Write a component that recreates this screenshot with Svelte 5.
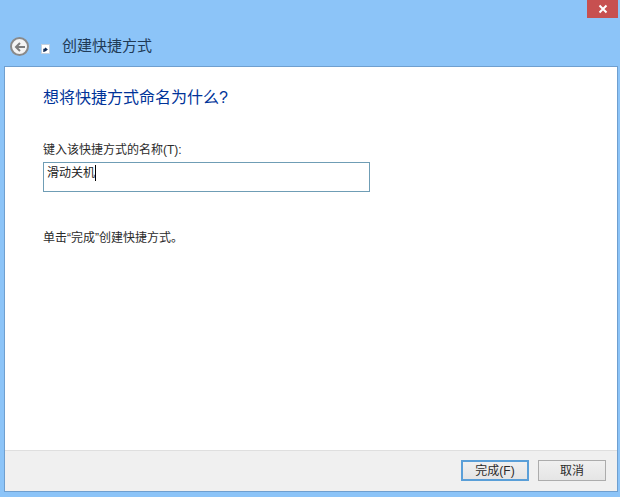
<script>
  let name = '滑动关机'
</script>

<div class="window">
  <div class="caption">
    <div class="close">
      <svg width="10" height="10" viewBox="0 0 10 10"><path d="M1.5 1.5 8.5 8.5M8.5 1.5 1.5 8.5" stroke="#fff" stroke-width="2" fill="none" /></svg>
    </div>
  </div>
  <div class="nav">
    <div class="back">
      <svg width="12" height="12" viewBox="0 0 12 12"><path d="M11 6H2.5M6 2 2 6l4 4" stroke="#7d7d7d" stroke-width="2" fill="none" /></svg>
    </div>
    <svg class="shortcut" width="9" height="10" viewBox="0 0 9 10">
      <rect x="0.5" y="0.5" width="8" height="9" fill="#fff" stroke="#c4d0de" />
      <path d="M3 8V5.5h2.2M4 4l1.8 1.5L4 7" stroke="#0f2a55" stroke-width="1.4" fill="none" />
    </svg>
    <span class="title">创建快捷方式</span>
  </div>
  <div class="panel">
    <div class="content">
      <h1>想将快捷方式命名为什么?</h1>
      <label for="name">键入该快捷方式的名称(T):</label>
      <div class="input" id="name">{name}<i class="caret"></i></div>
      <p>单击“完成”创建快捷方式。</p>
    </div>
    <div class="footer">
      <button class="primary">完成(F)</button>
      <button>取消</button>
    </div>
  </div>
</div>

<style>
  :global(body) {
    margin: 0;
    background: #8cc4f8;
  }
  .window {
    width: 620px;
    height: 497px;
    display: flex;
    flex-direction: column;
    background: #8cc4f8;
    font-family: "Liberation Sans", "Noto Sans CJK SC", sans-serif;
    color: #2b2b2b;
    overflow: hidden;
  }
  .caption {
    height: 18px;
    display: flex;
    justify-content: flex-end;
    padding-right: 2px;
    flex: none;
  }
  .close {
    width: 31px;
    height: 18px;
    background: #c75050;
    display: flex;
    align-items: center;
    justify-content: center;
  }
  .nav {
    height: 48px;
    flex: none;
    display: flex;
    align-items: center;
    padding: 9px 0 0 10px;
    box-sizing: border-box;
  }
  .back {
    width: 15px;
    height: 15px;
    border: 2px solid #8a8a8a;
    border-radius: 50%;
    background: #f4f4f4;
    display: flex;
    align-items: center;
    justify-content: center;
  }
  .shortcut {
    margin-left: 12px;
    margin-top: 5px;
  }
  .title {
    margin-left: 12px;
    margin-bottom: 4px;
    font-size: 15px;
    color: #1f3a56;
  }
  .panel {
    flex: none;
    height: 426px;
    margin: 0 2px 0 4px;
    border: 1px solid #6f9fcf;
    background: #fff;
    display: flex;
    flex-direction: column;
    box-sizing: border-box;
  }
  .content {
    flex: 1;
    padding: 20px 0 0 38px;
  }
  h1 {
    margin: 0;
    font-size: 16px;
    line-height: 22px;
    font-weight: 400;
    color: #003399;
  }
  label {
    display: block;
    margin-top: 33px;
    font-size: 12px;
    line-height: 16px;
  }
  .input {
    margin-top: 4px;
    width: 322px;
    height: 28px;
    border: 1px solid #6f9db5;
    padding-left: 3px;
    font-size: 12px;
    line-height: 21px;
    color: #222;
  }
  .caret {
    display: inline-block;
    width: 1px;
    height: 16px;
    background: #000;
    vertical-align: -4px;
  }
  p {
    margin: 38px 0 0;
    font-size: 12px;
    line-height: 16px;
  }
  .footer {
    height: 41px;
    flex: none;
    box-sizing: border-box;
    background: #f0f0f0;
    border-top: 1px solid #dfdfdf;
    display: flex;
    justify-content: flex-end;
    align-items: flex-start;
    gap: 9px;
    padding: 9px 11px 0 0;
  }
  button {
    width: 68px;
    height: 21px;
    padding: 0;
    border: 1px solid #acacac;
    background: linear-gradient(#f0f0f0, #e5e5e5);
    font: inherit;
    font-size: 12px;
    line-height: 18px;
    color: #2b2b2b;
  }
  .primary {
    border: 2px solid #5a9fd8;
    line-height: 16px;
  }
</style>
